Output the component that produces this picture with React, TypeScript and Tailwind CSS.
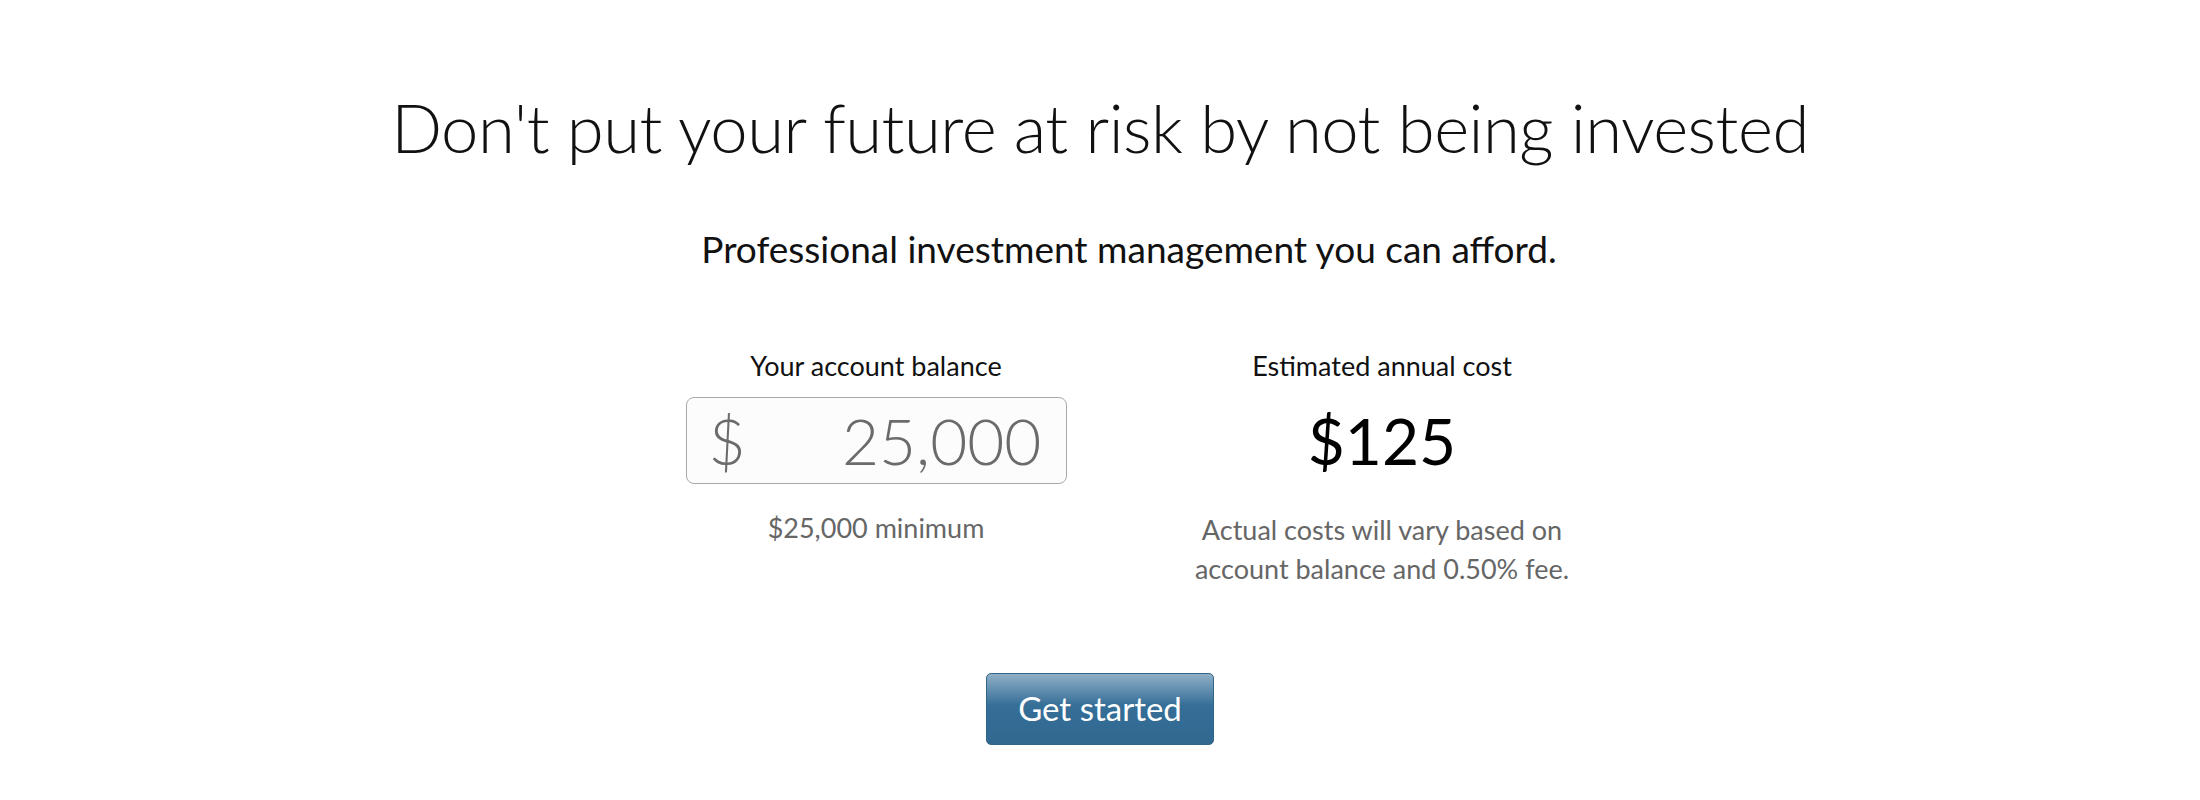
export default function App() {
  return (
    <div className="w-full min-h-[800px] bg-white font-['Lato',sans-serif] flex flex-col items-center pt-[89px]">
      <h1 className="text-[67px] leading-[76px] font-light text-[#111] tracking-[-0.5px]">
        Don't put your future at risk by not being invested
      </h1>

      <div className="flex flex-col items-center pl-[58px]">
        <div className="mt-[64px] text-[37px] leading-[40px] text-[#111]">
          Professional investment management you can afford.
        </div>

        <div className="mt-[82px] flex gap-[66px]">
          <div className="w-[440px] flex flex-col items-center">
            <div className="text-[27px] leading-[30px] text-[#111]">Your account balance</div>
            <div className="mt-[16px] w-[381px] h-[87px] border border-[#a9a9a9] rounded-[8px] bg-[#fcfcfc] flex items-center justify-between pl-[22px] pr-[24px] text-[#6b6b6b] text-[64px] font-light">
              <span>$</span>
              <span>25,000</span>
            </div>
            <div className="mt-[29px] text-[27px] leading-[30px] text-[#666]">$25,000 minimum</div>
          </div>

          <div className="w-[440px] flex flex-col items-center">
            <div className="text-[27px] leading-[30px] text-[#111]">Estimated annual cost</div>
            <div className="mt-[16px] h-[87px] flex items-center text-[64px] text-black">$125</div>
            <div className="mt-[26px] text-[27px] leading-[39px] text-[#666] text-center">
              Actual costs will vary based on
              <br />
              account balance and 0.50% fee.
            </div>
          </div>
        </div>
      </div>

      <button className="mt-[85px] w-[228px] h-[72px] rounded-[5px] border border-[#2f648b] bg-linear-to-b from-[#8fb0c7] via-[#356e97] via-45% to-[#306890] text-white text-[33px]">
        Get started
      </button>
    </div>
  );
}
